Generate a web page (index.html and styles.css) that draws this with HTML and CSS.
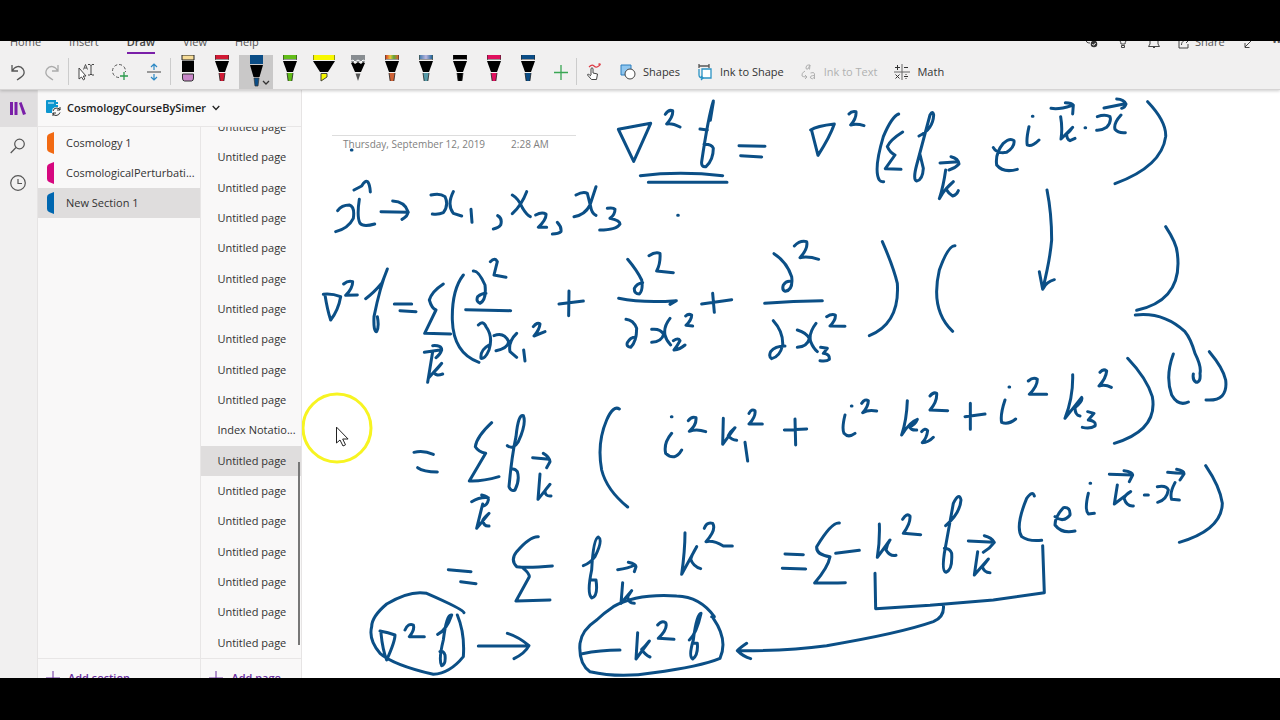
FILE: index.html
```html
<!DOCTYPE html>
<html lang="en">
<head>
<meta charset="utf-8">
<title>CosmologyCourseBySimer</title>
<link rel="stylesheet" href="styles.css">
</head>
<body>
<svg class="defs" aria-hidden="true">
  <defs>
    <linearGradient id="rainbow"><stop offset="0" stop-color="#d8442c"/><stop offset=".35" stop-color="#e8c53a"/><stop offset=".65" stop-color="#5da83c"/><stop offset="1" stop-color="#d8662c"/></linearGradient>
    <linearGradient id="galaxy"><stop offset="0" stop-color="#4d7fb0"/><stop offset=".5" stop-color="#b9b6e0"/><stop offset="1" stop-color="#28669c"/></linearGradient>
    <symbol id="pen" viewBox="0 0 14 34">
      <rect y="0" width="14" height="5" fill="currentColor"/>
      <rect y="4" width="14" height="1" fill="#999"/>
      <path d="M0 6h14L10 17H4z" fill="#000"/>
      <path d="M4 18h6L9 26H5z" fill="currentColor"/>
      <path d="M4 18 5.200 26M10 18 8.800 26" stroke="#222" stroke-width=".8"/>
      <path d="M0 0v5M14 0v5" stroke="#222"/>
    </symbol>
    <symbol id="plus" viewBox="0 0 14 14"><path d="M7 0v14M0 7h14" fill="none" stroke="currentColor"/></symbol>
    <symbol id="chevron" viewBox="0 0 8 6"><path d="M.7 1 4 4.500 7.300 1" fill="none" stroke="currentColor" stroke-width="1.300"/></symbol>
  </defs>
</svg>

<div class="app">
  <header class="ribbon">
    <div class="tabs-row">
      <nav class="tabs">
        <button class="tab">Home</button>
        <button class="tab">Insert</button>
        <button class="tab active">Draw</button>
        <button class="tab">View</button>
        <button class="tab">Help</button>
      </nav>
      <div class="tab-tools">
        <button aria-label="Sync status"><svg width="14" height="14" viewBox="0 0 14 14"><path d="M1 4c0 3 1 4 4 4" fill="none" stroke="#444"/><circle cx="9" cy="9" r="3.300" fill="#333"/><path d="m7.300 9 1.300 1.300 2-2.300" fill="none" stroke="#fff"/></svg></button>
        <button aria-label="Tell me"><svg width="14" height="14" viewBox="0 0 14 14"><path d="M3 3c0 3 2 3 2 6h4c0-3 2-3 2-6M5.500 10.500h3v2h-3z" fill="none" stroke="#444"/></svg></button>
        <button aria-label="Notifications"><svg width="14" height="14" viewBox="0 0 14 14"><path d="M3 9V3q4-4 8 0v6l1.500 2.500h-11zM5.500 11.500q1.500 3 3 0" fill="none" stroke="#444"/></svg></button>
        <button class="share"><svg width="12" height="14" viewBox="0 0 12 14"><path d="M4 4H1v9h9V9M3.500 10c0-4 3-5 7-5M8 2l3 3-3 3" fill="none" stroke="#444"/></svg>Share</button>
        <button aria-label="Full screen"><svg width="14" height="14" viewBox="0 0 14 14"><path d="m11 4-8 8m0-4v4.500h4.500" fill="none" stroke="#444"/></svg></button>
        <button aria-label="More">•••</button>
      </div>
    </div>
    <div class="toolbar">
      <div class="group">
        <button class="tool" aria-label="Undo"><svg width="16" height="18" viewBox="0 0 16 18"><path d="M2 2v6h6M2 8c3-5 8-6 11-2 3 5 0 7-6 11" fill="none" stroke="#555" stroke-width="1.300"/></svg></button>
        <button class="tool" aria-label="Redo"><svg width="16" height="18" viewBox="0 0 16 18"><path d="M14 2v6H8m6 0C11 3 6 2 3 6c-3 5 0 7 6 11" fill="none" stroke="#aaa" stroke-width="1.300"/></svg></button>
      </div>
      <div class="group">
        <button class="tool" aria-label="Select or type"><svg width="16" height="18" viewBox="0 0 16 18"><path d="M1 5v11l2.500-2 2 3 1.300-1-1.500-3H8z" fill="#fff" stroke="#444"/><path d="m5.500 6.500 2-5 2 5M6.300 5h2.500" fill="none" stroke="#444" stroke-width=".9"/><path d="M10 1.500h2l1 1 1-1h2M13 2v9m-3 1h2l1-1 1 1h2" fill="none" stroke="#444"/></svg></button>
        <button class="tool" aria-label="Lasso select"><svg width="18" height="18" viewBox="0 0 18 18"><circle cx="8" cy="8" r="6.500" fill="none" stroke="#555" stroke-dasharray="3 2"/><path d="M8 9h10v9H8z" fill="#f1f0f0"/><path d="M13 9v8M9 13h8" stroke="#2b9a4c" stroke-width="1.300"/></svg></button>
        <button class="tool" aria-label="Insert space"><svg width="16" height="18" viewBox="0 0 16 18"><path d="M1 8h14v2H1z" fill="#999"/><path d="M8 1v6M5 4l3-3 3 3M8 11v6m-3-3 3 3 3-3" fill="none" stroke="#2b88c4" stroke-width="1.200"/></svg></button>
      </div>
      <div class="group pens">
        <button class="tool" aria-label="Eraser"><svg width="14" height="34" viewBox="0 0 14 34"><path d="M1 0h12v5H1z" fill="#f6dc98" stroke="#222"/><path d="M1 6h12v11H1z"/><path d="M1.500 19h11v4q0 3-2 3h-7q-2 0-2-3z" fill="#c987c9" stroke="#333"/></svg></button>
        <button class="tool red" aria-label="Red pen"><svg width="14" height="34"><use href="#pen"/></svg></button>
        <button class="tool navy selected" aria-label="Blue pen, selected"><svg width="24" height="34" viewBox="0 0 24 34"><path d="M1 0h13v9H1z" fill="currentColor"/><path d="M1 10h13l-3.500 12h-6z"/><path d="M5 23h5L9 31H6z" fill="currentColor" stroke="#333" stroke-width=".7"/><path d="m14 26 3 3 3-3" fill="none" stroke="#333" stroke-width="1.300"/></svg></button>
        <button class="tool green" aria-label="Green pen"><svg width="14" height="34"><use href="#pen"/></svg></button>
        <button class="tool" aria-label="Yellow highlighter"><svg width="22" height="34" viewBox="0 0 22 34"><path d="M0 0h22v5H0z" fill="#f8f800"/><path d="M0 6h22l-7 11H7z"/><path d="M0 0v5M22 0v5" stroke="#333"/><path d="M8 18.500h6V22l-6 4z" fill="#f8f800" stroke="#443"/></svg></button>
        <button class="tool" aria-label="Pencil"><svg width="14" height="34" viewBox="0 0 14 34"><path d="M0 0h14v7H0z" fill="#888d91"/><path d="m0 8 2-1 2 2 3-2 3 2 2-2 2 1-4 9H4z"/><path d="m0 6 2-1 2 2 3-2 3 2 2-2 2 1" fill="none" stroke="#fff"/><path d="M4.500 18.500h5L7 26z" fill="#555"/></svg></button>
        <button class="tool orange" aria-label="Rainbow pen"><svg width="14" height="34"><use href="#pen"/><rect y="0" x="1" width="12" height="4" fill="url(#rainbow)"/></svg></button>
        <button class="tool teal" aria-label="Galaxy pen"><svg width="14" height="34"><use href="#pen"/><rect y="0" x="1" width="12" height="4" fill="url(#galaxy)"/></svg></button>
        <button class="tool black" aria-label="Black pen"><svg width="14" height="34"><use href="#pen"/></svg></button>
        <button class="tool pink" aria-label="Pink pen"><svg width="14" height="34"><use href="#pen"/></svg></button>
        <button class="tool navy" aria-label="Dark blue pen"><svg width="14" height="34"><use href="#pen"/></svg></button>
        <button class="tool add" aria-label="Add pen"><svg width="14" height="34" viewBox="0 0 14 34"><path d="M7 10v15M0 17.500h14" stroke="currentColor" fill="none" stroke-width="1.300"/></svg></button>
      </div>
      <div class="group last">
        <button class="tool" aria-label="Draw with touch"><svg width="16" height="18" viewBox="0 0 16 18"><path d="M5 12V5.500q1-1.500 2 0V10l4.500 1-1 5.500H5.500L1.500 12q0-2 3.500 1" fill="#fff" stroke="#444"/><path d="M3 4q3-3 5-1t4 .5q3-2 2-2.500-1-.5-1.500.5" fill="none" stroke="#dd3a44" stroke-width="1.200"/></svg></button>
        <button class="labeled"><svg width="16" height="16" viewBox="0 0 16 16"><path d="M1 1h10v10H1z" fill="#8fc6ef" stroke="#2b7fc0"/><circle cx="10" cy="10" r="5" fill="#fff" stroke="#444"/></svg>Shapes</button>
        <button class="labeled wide"><svg width="16" height="18" viewBox="0 0 16 18"><path d="M2 1v4m10-4v4M2 3h10" fill="none" stroke="#555" stroke-width="1.300"/><path d="M5 6h9v9H5z" fill="#fff" stroke="#2b93c4" stroke-width="1.300"/><path d="M2 6v6q0 3 4 3m-2-2 2 2-2 2" fill="none" stroke="#2b93c4" stroke-width="1.300"/></svg>Ink to Shape</button>
        <button class="labeled wide" disabled><svg width="16" height="18" viewBox="0 0 16 18"><path d="M9 2Q6 1 5 4q-.5 3 2 2l2-4-.5 4.500M4 8q-4 2-3 5 1 1 5 1m-2-2 2 2-2 2M9.500 10q4-1.500 4 1v5m0-3.500q-5 0-4 2.500 2 2 4-1" fill="none" stroke="currentColor"/></svg>Ink to Text</button>
        <button class="labeled wide"><svg width="16" height="16" viewBox="0 0 16 16"><path d="M8 0v16M0 8h16" stroke="#666"/><path d="M1 3.500h5M3.500 1v5M10 3.500h4M1.500 10.500l4 4m0-4-4 4M10 12.500h4M12 10v1m0 3v1" fill="none" stroke="#333"/></svg>Math</button>
      </div>
    </div>
  </header>

  <div class="workspace">
    <nav class="rail">
      <button class="on" aria-label="Notebooks"><svg width="18" height="16" viewBox="0 0 18 16"><path d="M1 1h3v13H1zM5.500 1h3v13h-3zM10 2l2.500-1L17 13l-3 1z" fill="#7a1fa8"/></svg></button>
      <button aria-label="Search"><svg width="16" height="16" viewBox="0 0 16 16"><circle cx="9.500" cy="6" r="4.800" fill="none" stroke="#555" stroke-width="1.200"/><path d="M6 9.500.700 15" stroke="#555" stroke-width="1.200"/></svg></button>
      <button aria-label="Recent notes"><svg width="16" height="16" viewBox="0 0 16 16"><circle cx="8" cy="8" r="7.300" fill="none" stroke="#555" stroke-width="1.200"/><path d="M8 4v4.500h4" fill="none" stroke="#555" stroke-width="1.200"/></svg></button>
    </nav>
    <aside class="nav">
      <button class="notebook">
        <svg width="16" height="18" viewBox="0 0 16 18"><path d="M1 2q0-1 1-1h9v2h2v2h-2v1h2v2h-1v6H2q-1 0-1-1z" fill="#0d96cf"/><path d="M3 4h6" stroke="#fff"/><circle cx="11.500" cy="12.500" r="4.500" fill="#f9f8f8"/><path d="M8 12q1-3.500 4-3t3 2m0-3v3h-3M15 13.500q-1 3-4 3t-3-2.500m0 3v-3h3" fill="none" stroke="#333"/></svg>
        <span>CosmologyCourseBySimer</span>
        <svg width="8" height="6"><use href="#chevron"/></svg>
      </button>
      <div class="columns">
        <section class="column sections">
          <ul class="section-list">
            <li><button class="orange-tab"><svg width="8" height="22" viewBox="0 0 8 22"><path d="M7 0v22l-5-2Q0 19 0 17V5q0-2 2-3z" fill="currentColor"/></svg><span>Cosmology 1</span></button></li>
            <li><button class="pink-tab"><svg width="8" height="22" viewBox="0 0 8 22"><path d="M7 0v22l-5-2Q0 19 0 17V5q0-2 2-3z" fill="currentColor"/></svg><span>CosmologicalPerturbati...</span></button></li>
            <li><button class="blue-tab current"><svg width="8" height="22" viewBox="0 0 8 22"><path d="M7 0v22l-5-2Q0 19 0 17V5q0-2 2-3z" fill="currentColor"/></svg><span>New Section 1</span></button></li>
          </ul>
          <footer><button class="adder"><svg width="14" height="14"><use href="#plus"/></svg>Add section</button></footer>
        </section>
        <section class="column pages">
          <div class="page-scroll">
            <ul class="page-list">
              <li><button>Untitled page</button></li>
              <li><button>Untitled page</button></li>
              <li><button>Untitled page</button></li>
              <li><button>Untitled page</button></li>
              <li><button>Untitled page</button></li>
              <li><button>Untitled page</button></li>
              <li><button>Untitled page</button></li>
              <li><button>Untitled page</button></li>
              <li><button>Untitled page</button></li>
              <li><button>Untitled page</button></li>
              <li><button>Index Notatio...</button></li>
              <li><button class="current">Untitled page</button></li>
              <li><button>Untitled page</button></li>
              <li><button>Untitled page</button></li>
              <li><button>Untitled page</button></li>
              <li><button>Untitled page</button></li>
              <li><button>Untitled page</button></li>
              <li><button>Untitled page</button></li>
            </ul>
            <div class="thumb"></div>
          </div>
          <footer><button class="adder"><svg width="14" height="14"><use href="#plus"/></svg>Add page</button></footer>
        </section>
      </div>
    </aside>

    <main class="note">
      <div class="note-title"></div>
      <div class="note-date"><span>Thursday, September 12, 2019</span><span>2:28 AM</span></div>
      <svg class="ink" viewBox="302 90 978 588" preserveAspectRatio="xMinYMin meet" role="img" aria-label="Handwritten derivation of the Laplacian of f in Fourier space">
        <!-- x vector components -->
        <g transform="translate(300 90) scale(.33333)">
          <path d="M154 180h2M162 300l23-12q10-18 18-13 7 10 8 31M113 362q12-17 35-17 17 5 12 40-15 30-53 40M178 328q-8 52 2 72 10 12 44 2M243 365l82 2M278 333q37 2 46 32 1 13-18 23M393 315q27-7 42 5 12 25-5 48-15 7-33 4M460 305q-20 40 0 65l25 8M513 358l3 39M593 377q15 8 9 28-7 10-22 12M637 315q18 10 31 40 12 20 23 25M680 305q-15 40-43 66M707 375q18-10 31-3 2 16-23 40h25M772 397q13 13 11 28-8 7-26 7M828 315q22-12 34-5l10 40q3 20 16 26M888 290l-18 55q-15 30-48 35M922 355q18-3 23 3 0 17-15 27 30 7 30 17-10 18-61 18"/>
        </g>
        <!-- Laplacian of f, and the second-derivative terms -->
        <g transform="translate(600 90) scale(.33333)">
          <path d="M55 118l97-18q-22 50-51 114L56 120M196 73q9-15 22-11 2 18-18 40 15-4 40 9M340 33q-15 47-35 182-2 17 13 15 22-20 22-55-5-13-28-12M340 36l-9 55M300 117l22 3M417 167l78 2M422 197l63 4M121 257q119-14 247 0M145 277h236M233 376h2M632 120q18-12 71-18-13 38-49 94L635 122M747 72q8-10 21-7 2 20-16 40 18-5 40 2M896 72q-21 8-46 68-30 100-12 130 4 6 13 5M908 126q-38 24-46 44 8 18 23 25l-29 41 47 2"/>
          <path d="M83 508q27 32 42 62 5 30-7 42-16 0-15-17 7-15 25-17M147 497q18-12 33-7 2 30-10 53l50 5M56 625q74 15 173 7l-19 11M305 642l90-13M338 610l5 57M522 491q38 24 53 69 5 40-19 44-11-4-6-19 10-15 25-10M583 468q17-18 37-13 5 20-20 48 25-5 56 5M494 640q86-8 173-8M847 455q33 75 45 125 8 120-84 157"/>
          <path d="M78 688q22 2 32 27 0 40-18 57-14-2-10-14 8-16 26-18M155 718q26-3 36 15-6 22-36 24M210 685q-20 25-15 50 3 15 17 30M220 752q15-10 20 0-10 18-18 28 18-2 33-15M257 678q8-8 18-3 0 15-17 31l20 2M520 692q30 33 28 73-8 35-33 41-10-6-3-21 13-17 43-17M592 720q28 8 36 26-6 24-36 26M648 700q-23 30-16 55 8 20 20 30M680 680q15-10 26-5 2 15-16 33l45 1M662 772l20 3-12 15q20 2 18 18-8 7-28 4"/>
        </g>
        <!-- Fourier exponential and right-hand parentheses -->
        <g transform="translate(900 90) scale(.33333)">
          <path d="M57 138q42-20 44-63-3-15-11 0L50 225q-12 45 0 48 18-3 20-38-7-30-11-45M120 219l55-4M153 200q22 5 24 22-12 13-30 18M137 240q-7 50-19 86 17-31 42-51-15 15-22 22 7 13 20 21 12-3 17-16M280 173q10 19 40 14 25-17 22-35-12-10-32 8-25 30-20 65 20 25 62 13M387 110q-9 40-5 55 13 7 35-15M397 79h2M453 55q22 5 62-8M496 38q19 0 24 7l-2 27M482 80q6 35 1 67l35-35q-8 13-18 20 0 16 10 20l15-7M555 113h2M612 54l60-12M650 27q22 1 28 15-3 10-13 13M592 80q23-8 38 0 5 15-10 32-15 10-30 9M663 75q-23 25-18 43 10 12 31 10M743 35q57 60 54 105-12 90-152 141"/>
          <path d="M441 300q14 70 14 150-5 60-27 148l-10-53M430 595q10-20 33-26M797 410q33 50 35 80 18 140-122 171M706 675q84-10 149 50 17 20 30 65 20 40 15 60 3 27-12 27-11-7-8-25M165 467q-20-2-47 73-28 120 40 184"/>
        </g>
        <!-- Expanded Laplacian -->
        <g transform="translate(300 220) scale(.33333)">
          <path d="M70 223q25-3 52 7-7 40-30 70-10-30-17-75M131 192q14-12 27-7 0 20-21 41l35-1M262 147q-22 53-40 143-2 45 8 45 8-15 2-45M261 150l-14 36M197 236q23-16 48-46M283 252h52M300 272l48 3M430 192q-35 23-42 48 7 25 20 30l-34 70 78 2M373 397l47-7M398 377q27-2 27 13-5 15-17 23M398 395l-15 92 2-12 40-45q-15 20-23 25 3 15 26 7M490 165q-35 45-33 135 3 100 80 127M520 153q15-3 35 42 5 45-15 55-13-5-7-20 12-10 25-10M571 125q14-15 21 0l-10 40 36 7M497 269l135 3M777 252l73-9M807 213l-1 74M535 315q15-15 23 5 22 30 9 70-12 28-24 25-3-25 24-40M582 347q30-12 44 18-2 20-38 27M650 340q-26 25-20 55l20 17M671 390l4 33M700 320q12-15 20-8-2 18-18 36l33-13"/>
        </g>
        <!-- Left half of the lower lines -->
        <g transform="translate(300 400) scale(.33333)">
          <path d="M342 157q28-7 58 6M353 203q17 12 59 13M575 68q-45 42-49 72 9 15 31 20l-49 83q37 2 89-13M622 137q18 13 33-12 25-55 15-78-15-7-22 63-13 60-21 150 5 15 18 10 15-30 7-55-7-10-17-8M698 173l50 5M730 160q18 10 20 25l-10 18M720 222l-6 76 36-45q-10 12-15 19 0 18 18 16M515 305q25-15 50-12M545 285q22 5 20 15-3 15-15 18M548 312l-18 73 37-45q-17 15-19 22 4 18 19 16M958 27q-18-12-38 33-30 70-15 150 15 60 78 111"/>
          <path d="M445 509l68 6M482 545l46 6M715 410q-25-2-65 45-20 25 0 45 30 5 107-2M670 505q18 15 18 25l-40 73 102-3M850 497q20-7 35-27 25-50 10-59-15 4-20 99-15 70 0 84 20-4 13-54h-13M953 509q32-4 52-14M985 487q23 5 23 13l-5 15M968 548l-5 62 32-38-12 18q2 20 20 20M1155 398q0 52-10 125l45-83q-15 25-18 38 8 22 30 28M1213 385q7-20 25-15 12 20-20 55 22-5 52 13h27"/>
          <path d="M492 638q-2-10-112-58-50-10-120 32-45 38-45 68-10 40 25 80 40 35 160 63 50-3 90-53 5-70-18-125M240 693q25 5 45 12 0 20-25 75-12-30-17-80M315 690q10-22 25-15 5 15-12 35h45M413 703q27-13 42-58-15-5-25 75-15 60-5 77 13-2 10-32-5-15-15-10M535 738h145M622 700q33 10 65 37-12 23-45 39M1235 650h8q-43-60-113-62-120-8-190 32-30 20-50 40-45 30-50 70-5 60 30 85 90 20 190 3 140-18 200-43 25-55-20-120M847 761q53-11 113-11M1013 698l-5 79 40-54q-13 17-23 25 10 17 25 23M1073 675q12-15 24-7 8 17-22 47l47 3M1168 720q22-20 35-80-13 0-23 80-15 50-2 57 17-12 14-47h-14"/>
        </g>
        <!-- Middle terms, bracket and return arrow -->
        <g transform="translate(580 350) scale(.33333)">
          <path d="M275 250q-25 30-18 60 28 25 48-10M274 200h2M325 212q10-14 23-9 2 22-20 41 22-9 49 1M430 205l-2 78 37-50q-15 12-20 24 10 13 25 14M507 190q8-15 18-8 3 18-18 40h40M495 277l8 56M613 240l67-3M645 207l2 78M795 195q-10 40-3 55 13 15 33 0M814 168h2M845 160q10-15 20-8 0 18-17 36 17-10 42-5M615 612l55 2M607 655l70 2M778 519q-23-4-68 71-2 25 40 30-5 30-46 79 21 1 92-1M767 610l71-9M898 522q2 48-6 100l38-52q-10 15-12 30 12 20 30 16M968 508q12-20 22-10 2 22-20 52l52 4M885 670l2 106 163-10 190-16 153-22-5-141M1090 763q5 37-30 52-100 35-320 72-120 16-268 15M500 880q-22 15-28 22 18 18 40 24"/>
        </g>
        <!-- Right half of the lower lines -->
        <g transform="translate(900 340) scale(.33333)">
          <path d="M22 182q-2 58-17 103 25-40 47-47-7 17-24 22 7 12 22 10M90 168q10-13 20-8 2 25-20 50l53 2M65 275q10-13 18-3-3 23-16 36 18 0 33-16M195 230l60-8M211 190v78M315 180q-15 45-10 67 20 8 42-10M327 141h2M385 123q15-13 27-5 0 22-24 45h52M518 104q2 66-23 131l50-63q5 10-20 31 0 22 15 25M600 97q10-12 20-4-2 22-23 45 18-6 37 4M563 215l19 5-17 20q25 3 20 18-15 10-38 4M683 55q57 60 74 115 18 100-114 140M820 42q-25 68-5 123 20 35 50 21M928 35q42 50 49 85 8 65-59 60"/>
          <path d="M137 557q43-37 46-77-5-25-23 10l-27 150q-8 55 5 57 20-7 17-57-5-15-22-15M205 603l77 4M253 587q22 5 30 20-13 18-33 30M233 635l-10 70 42-48q-10 13-18 23 5 18 23 18M403 468q-5-18-23 7-35 85-15 115 20 15 60 11M465 530q25 20 45-5 2-25-20-22-25 27-25 52 20 27 60 18M565 460q-12 50 0 62l18-2M570 430h2M628 403l69 2M672 392q25 3 26 13l-10 20M652 435l-9 57 49-37q-17 10-20 20 8 25 28 23M733 465h12M772 440q28-5 33 10-5 30-32 37M825 428q-17 32-10 50l23 2M803 397q27 3 47 3M830 388q23 4 22 14l-12 18M917 377q43 63 50 113-2 80-129 117"/>
        </g>
        <circle class="halo" cx="337" cy="428" r="34"/>
        <path class="cursor" d="M336.500 427.500v15.500l3.500-3 3 6 2.500-1.200-2.800-5.800h5z"/>
      </svg>
    </main>
  </div>
</div>
</body>
</html>
```

FILE: styles.css
```css
* { box-sizing: border-box; }

body {
  margin: 0;
  height: 100vh;
  padding: 41px 0 42px;
  background: #000;
  color: #333;
  font: 11px/16px "Open Sans", "Noto Sans", sans-serif;
  overflow: hidden;
}

button {
  border: 0;
  padding: 0;
  margin: 0;
  background: none;
  color: inherit;
  font: inherit;
  text-align: left;
  white-space: nowrap;
}

ul { list-style: none; margin: 0; padding: 0; }
svg { display: block; flex: none; }
.defs { position: absolute; width: 0; height: 0; }

.app {
  height: 100%;
  display: flex;
  flex-direction: column;
  overflow: hidden;
  background: #fff;
}

/* Ribbon */
.ribbon {
  position: relative;
  z-index: 1;
  background: #f1f0f0;
  border-bottom: 1px solid #d6d4d4;
  box-shadow: 0 1px 3px #0003;
}

.tabs-row {
  height: 13px;
  display: flex;
  justify-content: space-between;
  align-items: flex-end;
  overflow: hidden;
}

.tabs { display: flex; gap: 28px; padding-left: 10px; }
.tab { padding-bottom: 2px; border-bottom: 2px solid transparent; color: #555; }
.tab.active { border-color: #7a1fa8; font-weight: 600; color: #444; }

.tab-tools { display: flex; align-items: center; gap: 17px; padding-bottom: 4px; color: #555; margin-right: -5px; }
.share { display: flex; align-items: center; gap: 5px; }

.toolbar { display: flex; height: 35px; }
.group { display: flex; align-items: center; position: relative; }
.group:not(.last)::after {
  content: "";
  position: absolute;
  right: 0;
  top: 4px;
  bottom: 4px;
  border-right: 1px solid #ccc;
}
.group:first-child { padding-left: 1px; }
.tool { width: 34px; height: 34px; display: flex; align-items: center; justify-content: center; }
.pens { align-items: flex-start; padding-top: 1px; }
.tool.selected { background: #c9c8c8; justify-content: flex-end; }
.tool.add { width: 32px; color: #3aa653; }
.red { color: #d11a34; }
.navy { color: #0b4d86; }
.green { color: #62bd19; }
.orange { color: #cf6236; }
.teal { color: #569aa8; }
.black { color: #000; }
.pink { color: #e0115f; }

.labeled { display: flex; align-items: center; gap: 7px; margin-left: 9px; }
.wide { margin-left: 17px; }
.labeled:disabled { color: #b0b0b0; }

/* Workspace */
.workspace { flex: 1; min-height: 0; display: flex; }

.rail { width: 37px; background: #f1f0f0; flex: none; }
.rail button { width: 100%; height: 37px; display: flex; align-items: center; justify-content: center; padding-right: 2px; }
.rail .on { background: #e0dedf; }

.nav {
  width: 265px;
  flex: none;
  display: flex;
  flex-direction: column;
  background: #f9f8f8;
  border-left: 1px solid #e6e4e4;
  border-right: 1px solid #e6e4e4;
  color: #222;
}

.notebook {
  height: 37px;
  display: flex;
  align-items: center;
  gap: 6px;
  padding-left: 7px;
  border-bottom: 1px solid #e8e6e6;
  font-weight: 600;
}

.columns { flex: 1; min-height: 0; display: flex; }
.column { display: flex; flex-direction: column; min-width: 0; }
.sections { flex: 163; border-right: 1px solid #e8e6e6; }
.pages { flex: 100; }

.section-list { flex: 1; display: grid; grid-auto-rows: minmax(30px, auto); align-content: start; padding-top: 1px; }
.section-list button {
  width: 100%;
  height: 100%;
  display: flex;
  align-items: center;
  gap: 11px;
  padding-left: 9px;
}
.section-list span { color: #333; }
.orange-tab { color: #f26a13; }
.pink-tab { color: #d6077f; }
.blue-tab { color: #0067b0; }
.section-list .current, .page-list .current { background: #dfdddd; }

.page-scroll { position: relative; flex: 1; min-height: 0; overflow: hidden; }
.page-list { display: flex; flex-direction: column; height: calc(100% + 15px); margin-top: -15px; }
.page-list li { flex: 1; }
.page-list button { width: 100%; height: 100%; padding-left: 16px; color: #333; }
.thumb { position: absolute; right: 1px; top: 63%; bottom: 13px; width: 2px; background: #777; }

.column footer { height: 20px; overflow: hidden; border-top: 1px solid #e8e6e6; }
.adder { height: 38px; display: flex; align-items: center; gap: 8px; padding-left: 8px; font-weight: 600; color: #6b2fa0; }

/* Note */
.note { flex: 1; min-width: 0; position: relative; overflow: hidden; }
.note-title { height: 46px; width: 244px; margin-left: 30px; border-bottom: 1px solid #ddd; }
.note-date { display: flex; gap: 26px; padding-left: 41px; font-size: 10px; color: #808080; }

.ink {
  position: absolute;
  inset: 0;
  width: 100%;
  fill: none;
  stroke: #0b4f86;
  stroke-width: 9;
  stroke-linecap: round;
  stroke-linejoin: round;
}
.ink .halo { stroke: #f7f421; stroke-width: 3; }
.ink .cursor { fill: #fff; stroke: #222; stroke-width: 1; stroke-linejoin: miter; }
```
